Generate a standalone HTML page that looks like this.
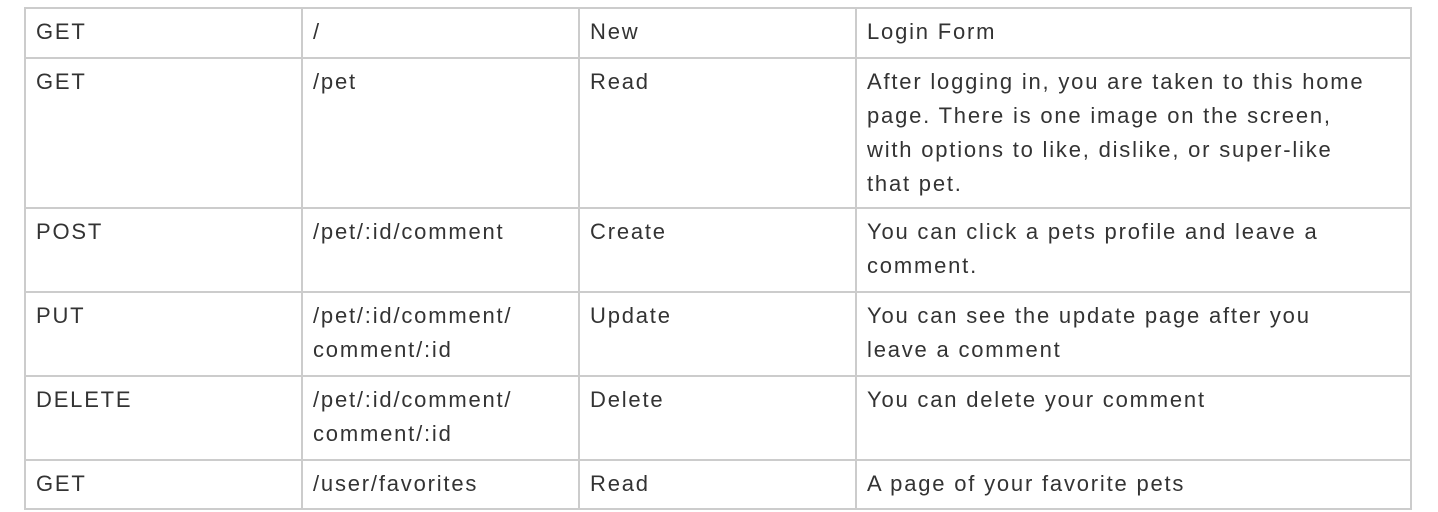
<!DOCTYPE html>
<html><head><style>
body{margin:0;background:#fff;width:1438px;height:512px;overflow:hidden}
table{position:absolute;left:24px;top:7px;border-collapse:collapse;font-family:"Liberation Sans",sans-serif;font-size:22px;color:#333;line-height:34px;letter-spacing:1.8px}
td{border:2px solid #ccc;padding:6px 10px 4px 10px;vertical-align:top;white-space:nowrap}
</style></head><body>
<table>
<colgroup><col style="width:277px"><col style="width:277px"><col style="width:277px"><col style="width:555px"></colgroup>
<tr style="height:50px"><td>GET</td><td>/</td><td>New</td><td>Login Form</td></tr>
<tr style="height:150px"><td>GET</td><td>/pet</td><td>Read</td><td>After logging in, you are taken to this home<br>page. There is one image on the screen,<br>with options to like, dislike, or super-like<br>that pet.</td></tr>
<tr style="height:84px"><td>POST</td><td>/pet/:id/comment</td><td>Create</td><td>You can click a pets profile and leave a<br>comment.</td></tr>
<tr style="height:84px"><td>PUT</td><td>/pet/:id/comment/<br>comment/:id</td><td>Update</td><td>You can see the update page after you<br>leave a comment</td></tr>
<tr style="height:84px"><td>DELETE</td><td>/pet/:id/comment/<br>comment/:id</td><td>Delete</td><td>You can delete your comment</td></tr>
<tr style="height:49px"><td>GET</td><td>/user/favorites</td><td>Read</td><td>A page of your favorite pets</td></tr>
</table>
</body></html>
